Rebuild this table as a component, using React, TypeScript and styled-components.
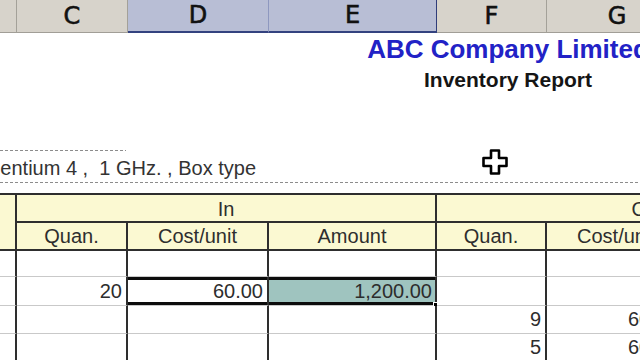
import { FC } from 'react'
import styled, { createGlobalStyle, css } from 'styled-components'

const GlobalStyle = createGlobalStyle`
    html, body {
        margin: 0;
        padding: 0;
        background: #fff;
    }
    body {
        width: 640px;
        height: 360px;
        overflow: hidden;
    }
`

// widths of columns B (partial) .. H, each including its right grid line
const COLS = '17px 111px 141px 168px 110px 141px 170px'
const LINE = '#2e2e2e'

type Row = { c?: string; d?: string; e?: string; f?: string; g?: string; sel?: boolean }

const rows: Row[] = [
    {},
    { c: '20', d: '60.00', e: '1,200.00', sel: true },
    { f: '9', g: '60.00' },
    { f: '5', g: '60.00' },
]

const subHeads = ['Quan.', 'Cost/unit', 'Amount', 'Quan.', 'Cost/unit', 'Amount']

const App: FC = () => {
    return (
        <Sheet>
            <GlobalStyle />
            <ColHeaders>
                <ColHead />
                <ColHead>C</ColHead>
                <ColHead $sel>D</ColHead>
                <ColHead $sel $edge>E</ColHead>
                <ColHead>F</ColHead>
                <ColHead>G</ColHead>
                <ColHead>H</ColHead>
            </ColHeaders>

            <Banner>
                <Company>ABC Company Limited</Company>
                <ReportName>Inventory Report</ReportName>
            </Banner>

            <DashRule $width={126} $top={55} />
            <Desc>
                <DescText>Pentium 4 ,&nbsp; 1 GHz. , Box type</DescText>
            </Desc>
            <DashRule $top={0} />

            <Table>
                <HeadCell $rows={2} />
                <HeadCell $span={3}>In</HeadCell>
                <HeadCell $span={3} $open>Out</HeadCell>
                {subHeads.map((t, i) => (
                    <HeadCell key={i} $sub>{t}</HeadCell>
                ))}
                {rows.map((r, i) => (
                    <DataRow key={i} row={r} />
                ))}
            </Table>

            <Cursor width="28" height="28" viewBox="0 0 28 28">
                <path
                    d="M10 2.5 H18 V10 H25.5 V18 H18 V25.5 H10 V18 H2.5 V10 H10 Z"
                    fill="#fff"
                    stroke="#000"
                    strokeWidth="2.6"
                    strokeLinejoin="round"
                />
            </Cursor>
        </Sheet>
    )
}

const DataRow: FC<{ row: Row }> = ({ row }) => (
    <>
        <Cell />
        <Cell>{row.c}</Cell>
        <Cell $sel={row.sel}>{row.d}</Cell>
        <Cell $sel={row.sel} $hl={row.sel} $pad={3}>
            {row.e}
            {row.sel && <FillHandle />}
        </Cell>
        <Cell>{row.f}</Cell>
        <Cell $pad={8}>{row.g}</Cell>
        <Cell $open />
    </>
)

const Sheet = styled.div`
    position: relative;
    width: 640px;
    height: 360px;
    overflow: hidden;
    background: #fff;
    font-family: "Liberation Sans", Arial, sans-serif;
    color: #2b2b2b;
`
Sheet.displayName = 'Sheet'

const ColHeaders = styled.div`
    display: grid;
    grid-template-columns: ${COLS};
    width: max-content;
    height: 33px;
`
ColHeaders.displayName = 'ColHeaders'

const ColHead = styled.div<{ $sel?: boolean; $edge?: boolean }>`
    box-sizing: border-box;
    display: flex;
    align-items: center;
    justify-content: center;
    padding-bottom: 1px;
    font-family: "DejaVu Sans", Verdana, sans-serif;
    font-size: 24px;
    color: #111;
    -webkit-text-stroke: 0.6px #111;
    background: ${p => (p.$sel ? '#b8bed5' : '#d7d3cb')};
    border-right: 1px solid ${p => (p.$edge ? '#2f3d7a' : p.$sel ? '#8e98bf' : '#a4a199')};
    border-bottom: ${p => (p.$sel ? '2px solid #33427f' : '1px solid #a19e97')};
`
ColHead.displayName = 'ColHead'

const Banner = styled.div`
    width: 1016px;
    display: flex;
    flex-direction: column;
    align-items: center;
    padding-top: 1px;
    white-space: nowrap;
`
Banner.displayName = 'Banner'

const Company = styled.div`
    height: 30px;
    line-height: 30px;
    font-size: 26px;
    font-weight: bold;
    color: #2222c6;
`
Company.displayName = 'Company'

const ReportName = styled.div`
    height: 31px;
    line-height: 32px;
    font-size: 21px;
    font-weight: bold;
    color: #151515;
`
ReportName.displayName = 'ReportName'

const DashRule = styled.div<{ $width?: number; $top: number }>`
    width: ${p => (p.$width ? `${p.$width}px` : '100%')};
    height: 1px;
    margin-top: ${p => p.$top}px;
    background: repeating-linear-gradient(90deg, #8c8c8c 0 3px, transparent 3px 5px);
`
DashRule.displayName = 'DashRule'

const Desc = styled.div`
    height: 31px;
    padding-top: 3px;
    box-sizing: border-box;
    line-height: 28px;
    font-size: 20px;
    white-space: nowrap;
    color: #333;
`
Desc.displayName = 'Desc'

const DescText = styled.span`
    display: inline-block;
    margin-left: -13px;
`
DescText.displayName = 'DescText'

const Table = styled.div`
    display: grid;
    grid-template-columns: ${COLS};
    grid-template-rows: 28px 28px 26px 29px 28px 28px;
    width: max-content;
    margin-top: 10px;
    border-top: 2px solid ${LINE};
    font-size: 20px;
`
Table.displayName = 'Table'

const HeadCell = styled.div<{ $span?: number; $rows?: number; $sub?: boolean; $open?: boolean }>`
    box-sizing: border-box;
    display: flex;
    align-items: center;
    justify-content: center;
    background: #fbf9d2;
    color: #2e2e2e;
    white-space: nowrap;
    overflow: hidden;
    border-bottom: 2px solid ${LINE};
    border-right: ${p => (p.$open ? 'none' : `2px solid ${LINE}`)};
    ${p => p.$span && css`grid-column: span ${p.$span};`}
    ${p => p.$rows && css`grid-row: span ${p.$rows};`}
    ${p => !p.$sub && css`padding-top: 3px;`}
`
HeadCell.displayName = 'HeadCell'

const Cell = styled.div<{ $sel?: boolean; $hl?: boolean; $pad?: number; $open?: boolean }>`
    position: relative;
    box-sizing: border-box;
    display: flex;
    align-items: center;
    justify-content: flex-end;
    padding-right: ${p => p.$pad ?? 4}px;
    white-space: nowrap;
    color: #2d2d2d;
    background: ${p => (p.$hl ? '#9fc4bf' : '#fff')};
    border-bottom: 1px solid #c9c9c9;
    border-right: ${p => (p.$open ? 'none' : `2px solid ${LINE}`)};
    ${p =>
        p.$sel &&
        css`
            box-shadow: inset 0 3px 0 #0c0c0c, inset 0 -3px 0 #0c0c0c;
        `}
`
Cell.displayName = 'Cell'

const FillHandle = styled.span`
    position: absolute;
    right: -5px;
    bottom: -4px;
    width: 5px;
    height: 5px;
    background: #000;
    border: 1px solid #fff;
`
FillHandle.displayName = 'FillHandle'

const Cursor = styled.svg`
    position: absolute;
    left: 481px;
    top: 148px;
`
Cursor.displayName = 'Cursor'

export default App
